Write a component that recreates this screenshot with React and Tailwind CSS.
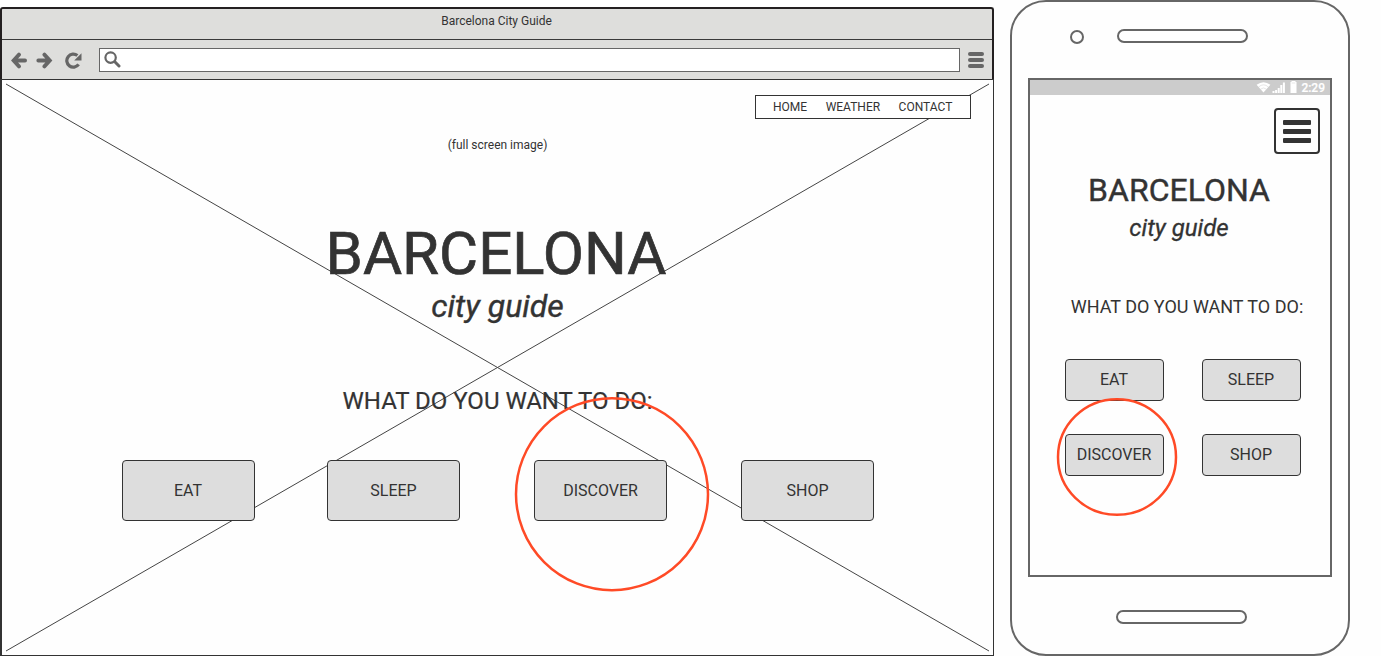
const DESKTOP_ACTIONS = [
  { label: "EAT", className: "pr-[1px]" },
  { label: "SLEEP", className: "ml-[72px]" },
  { label: "DISCOVER", className: "ml-[74px]" },
  { label: "SHOP", className: "ml-[74px]" },
];

const MOBILE_ACTIONS = ["EAT", "SLEEP", "DISCOVER", "SHOP"];

function BackIcon() {
  return (
    <svg width="17" height="17" viewBox="0 0 17 17" fill="none" stroke="#666" strokeWidth="3.800" strokeLinecap="round">
      <path d="M9 2.600 3.600 8.500 9 14.400M4 8.500H15.100" />
    </svg>
  );
}

function ForwardIcon() {
  return (
    <svg width="17" height="17" viewBox="0 0 17 17" fill="none" stroke="#666" strokeWidth="3.800" strokeLinecap="round">
      <path d="M8.400 2.600 13.800 8.500 8.400 14.400M13.400 8.500H2.300" />
    </svg>
  );
}

function ReloadIcon() {
  return (
    <svg width="17" height="17" viewBox="0 0 17 17" fill="none">
      <path d="M13.600 12.400A6.500 6.500 0 1 1 12.400 3.600" stroke="#666" strokeWidth="3.200" />
      <path d="M16.500 1.200V8.600H9.200Z" fill="#666" />
    </svg>
  );
}

function SearchIcon() {
  return (
    <svg width="17" height="17" viewBox="0 0 17 17" fill="none" stroke="#666">
      <circle cx="6.600" cy="6.600" r="5.200" strokeWidth="2.200" />
      <path d="M10.800 10.800 15 15" strokeWidth="3" strokeLinecap="round" />
    </svg>
  );
}

function StatusIcons() {
  return (
    <svg width="42" height="15" viewBox="0 0 42 15" fill="#fff">
      <path d="M0.600 4.800Q7.500-0.400 14.400 4.800L7.500 12.400Z" />
      <path d="M2.600 7Q7.500 2.600 12.400 7M4.600 9.200Q7.500 6.600 10.400 9.200" stroke="#ccc" strokeWidth="0.500" fill="none" />
      <path d="M16.500 11h2v2h-2zM19.100 10h2v3h-2zM21.700 8h2v5h-2zM24.300 5h2v8h-2zM26.900 2.500h2v10.500h-2z" />
      <path d="M35.500 2V1h4V2H40.500V13H34.500V2Z" />
      <path d="M35.700 3H39.300" stroke="#ccc" strokeWidth="0.500" />
    </svg>
  );
}

function BrowserWindow() {
  return (
    <div className="relative mt-[7px] flex h-[649px] w-[994px] flex-col">
      <div className="flex h-[72px] flex-col rounded-t-[3px] border-x-2 border-t-2 border-[#231f20] bg-[#dededc]">
        <div className="h-[31px] border-b border-[#3a3a3a] pr-[1px] text-center text-[12px] leading-[24px]">Barcelona City Guide</div>
        <div className="flex grow items-center pt-[1px] pl-[8px]">
          <BackIcon />
          <span className="w-[9px]" />
          <ForwardIcon />
          <span className="w-[12px]" />
          <ReloadIcon />
          <div className="mb-[1px] ml-[17px] flex h-[24px] w-[861px] items-center border border-[#666] bg-white pl-[4px]">
            <SearchIcon />
          </div>
          <div className="mb-[1px] ml-[8px] flex flex-col gap-[2px]">
            <span className="h-[4px] w-[16px] rounded-full bg-[#666]" />
            <span className="h-[4px] w-[16px] rounded-full bg-[#666]" />
            <span className="h-[4px] w-[16px] rounded-full bg-[#666]" />
          </div>
        </div>
      </div>
      <div className="relative flex grow flex-col items-center border border-l-2 border-[#333] bg-[#fefefe]">
        <svg className="absolute left-0 top-0" width="991" height="575" viewBox="2 80 991 575" stroke="#444" strokeWidth="1">
          <path d="M6 84 989 651M6 651 989 84" />
        </svg>
        <nav className="relative mt-[15px] mr-[22px] flex h-[24px] w-[216px] items-center self-end border border-[#333] bg-white pl-[17px] text-[12px]">
          <a>HOME</a>
          <a className="ml-[18.500px]">WEATHER</a>
          <a className="ml-[18.500px]">CONTACT</a>
        </nav>
        <p className="relative mt-[18px] text-[12px] leading-[16px]">(full screen image)</p>
        <h1 className="relative mt-[71px] pr-[3px] text-[60px] leading-[60px] [-webkit-text-stroke:0.7px_#333]">BARCELONA</h1>
        <p className="relative mt-[2px] text-[32px] leading-[40px] italic [-webkit-text-stroke:0.4px_#333]">city guide</p>
        <h2 className="relative mt-[60px] text-[24px] leading-[31px] [-webkit-text-stroke:0.2px_#333]">WHAT DO YOU WANT TO DO:</h2>
        <div className="relative mt-[43px] ml-[120px] flex self-start">
          {DESKTOP_ACTIONS.map((action) => (
            <button key={action.label} className={`h-[61px] w-[133px] rounded-[4px] border border-[#333] bg-[#ddd] text-[16px] ${action.className}`}>
              {action.label}
            </button>
          ))}
        </div>
      </div>
      <svg className="absolute left-[512px] top-[387px]" width="200" height="200" viewBox="512 394 200 200" fill="none" stroke="#ff4a26" strokeWidth="2.500">
        <circle cx="612" cy="494.200" r="96" />
      </svg>
    </div>
  );
}

function Phone() {
  return (
    <div className="relative ml-[16px] flex h-[656px] w-[340px] flex-col rounded-[36px] border-2 border-[#666] bg-[#fefefe]">
      <div className="flex h-[76px] items-start">
        <span className="mt-[28px] ml-[58px] h-[14px] w-[14px] rounded-full border-2 border-[#666]" />
        <span className="mt-[27px] ml-[33px] h-[14px] w-[131px] rounded-full border-2 border-[#666]" />
      </div>
      <div className="ml-[16px] flex h-[499px] w-[304px] flex-col border-2 border-[#666]">
        <div className="flex h-[15px] items-center justify-end bg-[#ccc] pr-[5px] text-[12px] font-medium text-white">
          <StatusIcons />
          <span className="ml-[3px] [-webkit-text-stroke:0.2px_#fff]">2:29</span>
        </div>
        <button className="mt-[13px] mr-[10px] flex h-[46px] w-[46px] flex-col items-center justify-center gap-[4px] self-end rounded-[4px] border-2 border-[#333]">
          <span className="h-[5px] w-[28px] rounded-[1px] bg-[#333]" />
          <span className="h-[5px] w-[28px] rounded-[1px] bg-[#333]" />
          <span className="h-[5px] w-[28px] rounded-[1px] bg-[#333]" />
        </button>
        <h1 className="mt-[18px] pr-[2px] text-center text-[32px] leading-[36px] [-webkit-text-stroke:0.4px_#333]">BARCELONA</h1>
        <p className="mt-[5px] pr-[2px] text-center text-[24px] leading-[31px] italic [-webkit-text-stroke:0.3px_#333]">city guide</p>
        <h2 className="mt-[51px] pl-[14px] text-center text-[18px] leading-[24px]">WHAT DO YOU WANT TO DO:</h2>
        <div className="mt-[40px] ml-[35px] grid w-[236px] grid-cols-2 gap-x-[38px] gap-y-[33px]">
          {MOBILE_ACTIONS.map((label) => (
            <button key={label} className="h-[42px] w-[99px] rounded-[4px] border border-[#333] bg-[#ddd] pr-[1px] text-[16px]">
              {label}
            </button>
          ))}
        </div>
      </div>
      <span className="mt-[33px] ml-[103.500px] h-[14px] w-[131px] rounded-full border-2 border-[#666]" />
      <svg className="absolute left-[43px] top-[393px]" width="124" height="124" viewBox="1055 395 124 124" fill="none" stroke="#ff4a26" strokeWidth="2.500">
        <ellipse cx="1117" cy="457" rx="59" ry="57.800" />
      </svg>
    </div>
  );
}

export default function App() {
  return (
    <main className="flex h-[656px] w-[1381px] overflow-hidden bg-[#fefefe] font-['Roboto',sans-serif] whitespace-nowrap text-[#333]">
      <BrowserWindow />
      <Phone />
    </main>
  );
}
